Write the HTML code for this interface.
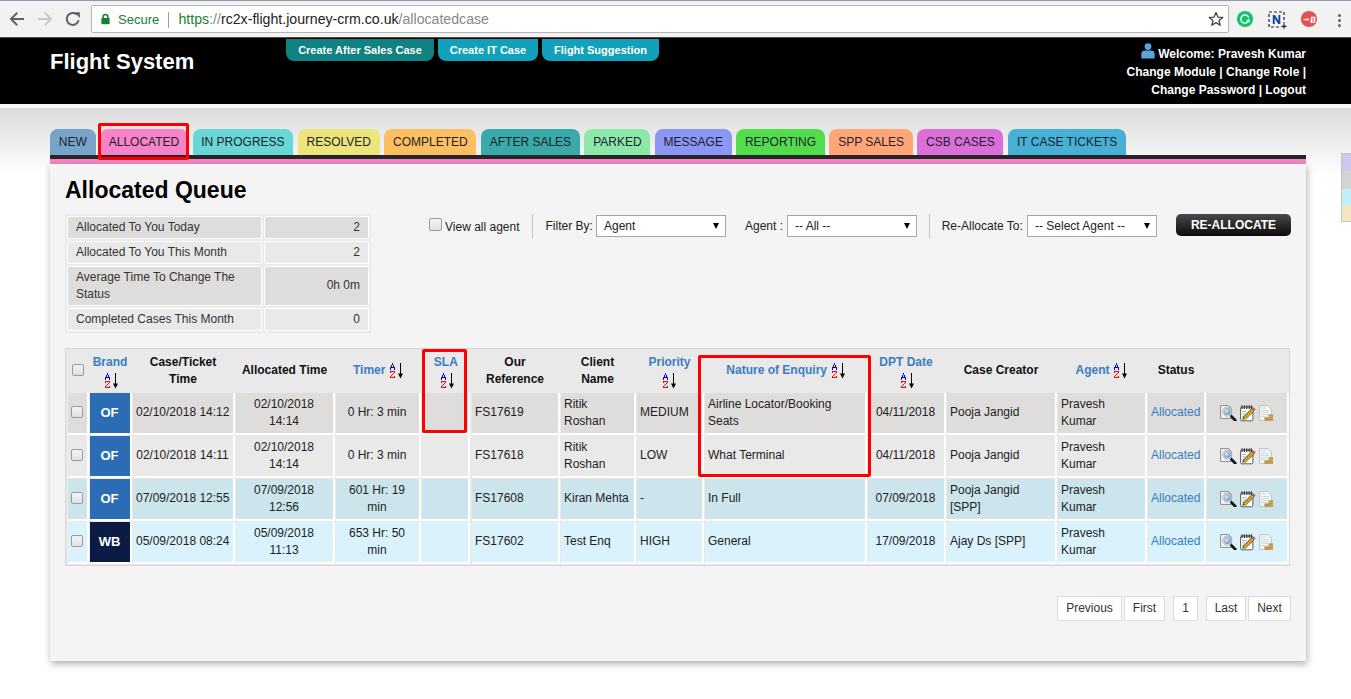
<!DOCTYPE html>
<html><head><meta charset="utf-8">
<style>
*{box-sizing:border-box;margin:0;padding:0}
html,body{width:1351px;height:699px;overflow:hidden;background:#fff;font-family:"Liberation Sans",sans-serif;font-size:12px;color:#222}
.abs{position:absolute}
#chrome{position:absolute;left:0;top:0;width:1351px;height:37px;background:#f2f2f2;border-top:1px solid #8f99a8}
#addr{position:absolute;left:91px;top:4px;width:1138px;height:28px;background:#fff;border:1px solid #b4b4b4;border-radius:2px}
#hdr{position:absolute;left:0;top:37px;width:1351px;height:67px;background:#000;box-shadow:inset 0 1px 0 #4a4a4a}
#strip{position:absolute;left:0;top:104px;width:1351px;height:4px;background:#f7f7f7}
#grad{position:absolute;left:0;top:108px;width:1351px;height:68px;background:linear-gradient(#dcdcdc,#fff)}
.topbtn{position:absolute;top:39px;height:22px;border-radius:0 0 8px 8px;color:#fff;font-weight:bold;font-size:11px;line-height:22px;text-align:center}
.tab{position:absolute;top:129px;height:26px;line-height:26px;border-radius:8px 8px 0 0;font-size:12px;color:#1d1d2b;text-align:center;white-space:nowrap}
#panel{position:absolute;left:50px;top:164px;width:1256px;height:497px;background:#f4f4f4;box-shadow:1px 3px 7px rgba(0,0,0,.32)}
.redbox{position:absolute;border:3px solid #f00;border-radius:2px}
.sel{position:absolute;top:215px;height:22px;width:130px;background:#fff;border:1px solid #a6a6a6;font-size:12px;line-height:20px;padding-left:7px}
.sel:after{content:"";position:absolute;right:6px;top:6.5px;border-left:3.5px solid transparent;border-right:3.5px solid transparent;border-top:6.5px solid #000}
.cb{position:absolute;width:12px;height:12px;border:1px solid #9a9a9a;border-radius:2px;background:linear-gradient(#f4f4f4,#e0e0e0)}
.lbl{position:absolute;font-size:12px;white-space:nowrap;line-height:17px;color:#222}
.st{position:absolute;border:1px solid #fff;padding:2px 8px;line-height:17px;font-size:12px;color:#333;white-space:nowrap}
.th{position:absolute;text-align:center;font-weight:bold;font-size:12px;line-height:17px;white-space:nowrap}
.td{position:absolute;border-right:2px solid #fff;border-bottom:2px solid #fff;display:flex;align-items:center;padding:0 4px 0.6px 3px;font-size:12px;line-height:17px;color:#222;white-space:nowrap}
.td .tdi{width:100%}
.pg{position:absolute;top:596px;height:25px;background:#fff;border:1px solid #dcdcdc;text-align:center;font-size:12px;line-height:23px;color:#333}
</style></head><body>

<div id="chrome">
  <svg class="abs" style="left:9px;top:10px" width="16" height="16" viewBox="0 0 16 16"><path d="M15 8H2.5M8.2 1.8L2 8L8.2 14.2" stroke="#5f6368" stroke-width="2" fill="none"/></svg>
  <svg class="abs" style="left:37px;top:10px" width="16" height="16" viewBox="0 0 16 16"><path d="M1 8H13.5M7.8 1.8L14 8L7.8 14.2" stroke="#c8c9cb" stroke-width="2" fill="none"/></svg>
  <svg class="abs" style="left:65px;top:10px" width="16" height="16" viewBox="0 0 16 16"><path d="M13.6 9.2A6 6 0 1 1 11.9 3.6" stroke="#5f6368" stroke-width="2" fill="none"/><path d="M9.2 1.3H14.9V7Z" fill="#5f6368"/></svg>
  <div id="addr">
    <svg class="abs" style="left:9px;top:6.5px" width="9" height="12" viewBox="0 0 9 12"><path d="M2.1 5.5V3.9A2.4 2.4 0 0 1 6.9 3.9V5.5" stroke="#188038" stroke-width="1.5" fill="none"/><rect x="0.4" y="4.9" width="8.2" height="6.3" fill="#188038"/></svg>
    <div class="abs" style="left:26px;top:6px;font-size:13px;color:#188038;line-height:16px">Secure</div>
    <div class="abs" style="left:76px;top:6px;width:1px;height:16px;background:#9e9e9e"></div>
    <div class="abs" style="left:86.5px;top:5px;font-size:14.15px;line-height:17px;white-space:nowrap;color:#222"><span style="color:#188038">https</span><span style="color:#888">://</span>rc2x-flight.journey-crm.co.uk<span style="color:#888">/allocatedcase</span></div>
    <svg class="abs" style="left:1116px;top:5px" width="16" height="16" viewBox="0 0 16 16"><path d="M8 1.5L9.9 6.1L14.8 6.4L11 9.5L12.2 14.3L8 11.6L3.8 14.3L5 9.5L1.2 6.4L6.1 6.1Z" stroke="#444" stroke-width="1.3" fill="none" stroke-linejoin="round"/></svg>
  </div>
  <svg class="abs" style="left:1236px;top:9px" width="18" height="18" viewBox="0 0 18 18"><circle cx="9" cy="9" r="8.1" fill="#15c26b"/><path d="M12.7 7.4A4.1 4.1 0 1 0 12.3 11.4" stroke="#fff" stroke-width="1.4" fill="none"/><path d="M10.3 10.4L13 11.6L12.9 8.7" stroke="#fff" stroke-width="1.2" fill="none"/></svg>
  <svg class="abs" style="left:1268px;top:10px" width="19" height="18" viewBox="0 0 19 18"><rect x="1" y="1" width="15" height="15" stroke="#222" stroke-width="1.2" stroke-dasharray="3 2" fill="none"/><path d="M4.8 13V4H6.8L10.4 9.6V4H12.3V13H10.3L6.7 7.4V13Z" fill="#1447a6"/><rect x="13.5" y="12.5" width="5" height="5" fill="#f2f2f2"/><path d="M16 12.8V17.8M13.5 15.3H18.5" stroke="#222" stroke-width="1.2"/></svg>
  <svg class="abs" style="left:1300px;top:9px" width="18" height="18" viewBox="0 0 18 18"><circle cx="9" cy="9" r="8.1" fill="#e05254"/><path d="M11.2 6.8H14.6Q15.8 6.8 15.6 8.2L15.5 9Q15.4 9.6 14.9 9.8Q15.5 10.1 15.4 10.8L15.3 11.6Q15.1 12.8 14 12.8H10.4ZM12.4 8.1L12.2 9.3H14.1L14.2 8.1ZM12.1 10.3L11.9 11.6H13.9L14 10.3Z" fill="#fff"/><path d="M2.8 9.2L10 8.2L8.4 9.4L9.3 11.2L7.5 10.3L5.5 10.6Z" fill="#fff" opacity="0.9"/></svg>
  <svg class="abs" style="left:1337px;top:12px" width="5" height="15" viewBox="0 0 5 15"><circle cx="2.5" cy="2.5" r="1.5" fill="#5f6368"/><circle cx="2.5" cy="7.5" r="1.5" fill="#5f6368"/><circle cx="2.5" cy="12.5" r="1.5" fill="#5f6368"/></svg>
</div>

<div id="hdr">
  <div class="abs" style="left:50px;top:12px;font-size:22px;font-weight:bold;color:#fff;line-height:25px;white-space:nowrap">Flight System</div>
  <div class="topbtn" style="left:286px;width:148px;top:2px;background:#118181">Create After Sales Case</div>
  <div class="topbtn" style="left:438px;width:100px;top:2px;background:#12a1bb">Create IT Case</div>
  <div class="topbtn" style="left:542px;width:117px;top:2px;background:#12a1bb">Flight Suggestion</div>
  <div class="abs" style="right:45px;top:8px;text-align:right;color:#fff;font-weight:bold;font-size:12px;line-height:18px;white-space:nowrap"><span style="position:relative">Welcome: Pravesh Kumar<svg class="abs" style="left:-17.5px;top:-3.8px" width="14" height="16" viewBox="0 0 14 16"><circle cx="7" cy="3.6" r="3.4" fill="#5aa3dc"/><path d="M0.3 15.6V11.2Q0.3 7.6 3.8 7.6H10.2Q13.7 7.6 13.7 11.2V15.6Z" fill="#5aa3dc"/></svg></span><br>Change Module | Change Role |<br>Change Password | Logout</div>
</div>
<div id="strip"></div>
<div id="grad"></div>

<!-- side boxes -->
<div class="abs" style="left:1341px;top:153px;width:12px;height:69px;border:1px solid #c4c4c4">
  <div style="height:17px;background:#cfc6ee"></div>
  <div style="height:18px;background:#d3d3d3"></div>
  <div style="height:16px;background:#c0eefa"></div>
  <div style="height:16px;background:#f3e6c0"></div>
</div>

<!-- tabs -->
<div class="tab" style="left:50px;width:45.5px;background:#76a5c9">NEW</div>
<div class="tab" style="left:100px;width:88px;background:#f784c8">ALLOCATED</div>
<div class="tab" style="left:192.5px;width:100.8px;background:#68d7d6">IN PROGRESS</div>
<div class="tab" style="left:297.8px;width:82px;background:#ebe57c">RESOLVED</div>
<div class="tab" style="left:384.3px;width:92.2px;background:#fcc062">COMPLETED</div>
<div class="tab" style="left:481px;width:98.9px;background:#3aa9a9">AFTER SALES</div>
<div class="tab" style="left:584.4px;width:66px;background:#8ce9a9">PARKED</div>
<div class="tab" style="left:654.8px;width:76.9px;background:#8b96f5">MESSAGE</div>
<div class="tab" style="left:736.2px;width:88.6px;background:#52dd4f">REPORTING</div>
<div class="tab" style="left:829.3px;width:83.5px;background:#ffa679">SPP SALES</div>
<div class="tab" style="left:917.3px;width:86.2px;background:#da6fd8">CSB CASES</div>
<div class="tab" style="left:1008px;width:118.2px;background:#47b1d5">IT CASE TICKETS</div>
<div class="abs" style="left:50px;top:155px;width:1256px;height:4px;background:#262626"></div>
<div class="abs" style="left:50px;top:159px;width:1256px;height:5px;background:#f584c4"></div>

<div id="panel"></div>

<!-- title -->
<div class="abs" style="left:65px;top:177px;font-size:23px;font-weight:bold;color:#000;line-height:26px;white-space:nowrap">Allocated Queue</div>

<!-- BODY_START -->
<div class="abs" style="left:65px;top:214px;width:306px;height:119px;background:#ebebeb"></div>
<div class="st" style="left:67px;top:216px;width:195px;height:23px;background:#dfdddb">Allocated To You Today</div>
<div class="st" style="left:264px;top:216px;width:105px;height:23px;background:#dfdddb;text-align:right;padding-top:2px">2</div>
<div class="st" style="left:67px;top:241px;width:195px;height:23px;background:#e9e9e9">Allocated To You This Month</div>
<div class="st" style="left:264px;top:241px;width:105px;height:23px;background:#e9e9e9;text-align:right;padding-top:2px">2</div>
<div class="st" style="left:67px;top:266px;width:195px;height:40px;background:#dfdddb">Average Time To Change The<br>Status</div>
<div class="st" style="left:264px;top:266px;width:105px;height:40px;background:#dfdddb;text-align:right;padding-top:9.5px">0h 0m</div>
<div class="st" style="left:67px;top:308px;width:195px;height:23px;background:#e9e9e9">Completed Cases This Month</div>
<div class="st" style="left:264px;top:308px;width:105px;height:23px;background:#e9e9e9;text-align:right;padding-top:2px">0</div>
<div class="cb" style="left:429px;top:218px;width:13px;height:13px"></div>
<div class="lbl" style="left:445px;top:218.5px">View all agent</div>
<div class="abs" style="left:532px;top:214px;width:1px;height:24px;background:#c2c2c2"></div>
<div class="lbl" style="left:545.5px;top:218px">Filter By:</div>
<div class="sel" style="left:596px">Agent</div>
<div class="lbl" style="left:745px;top:218px">Agent :</div>
<div class="sel" style="left:787px">-- All --</div>
<div class="abs" style="left:929px;top:214px;width:1px;height:24px;background:#c2c2c2"></div>
<div class="lbl" style="left:941.7px;top:218px">Re-Allocate To:</div>
<div class="sel" style="left:1027px">-- Select Agent --</div>
<div class="abs" style="left:1176px;top:214px;width:115px;height:22px;border-radius:5px;background:linear-gradient(#3c3c3c,#0c0c0c);color:#fff;font-weight:bold;font-size:12px;line-height:23px;text-align:center;background:linear-gradient(#4a4a4d,#0a0a0a)">RE-ALLOCATE</div>
<div class="abs" style="left:65px;top:348px;width:1225px;height:218px;border:1px solid #d6d6d6;background:#e9e9e9"></div>
<div class="cb" style="left:72px;top:364px;width:12px;height:12px"></div>
<div class="th" style="left:90px;top:354.3px;width:40px;color:#3b7dc0">Brand</div>
<svg class="abs" style="left:102.6px;top:372.6px" width="16" height="16" viewBox="0 0 16 16" shape-rendering="crispEdges"><path d="M4 0h1v2h-1zM3 2h1v2h-1zM5 2h1v2h-1zM2 4h5v1h-5zM2 5h1v2h-1zM6 5h1v2h-1z" fill="#00f"/><path d="M2 8h5v1h-5zM2 9h1v1h-1zM6 9h1v1h-1zM5 10h1v1h-1zM4 11h1v1h-1zM3 12h1v1h-1zM2 13h1v1h-1zM6 13h1v1h-1zM2 14h5v1h-5z" fill="#f00"/><path d="M12 0h1v11h-1z" fill="#000"/><path d="M10 10.5L15 10.5L12.5 15.5Z" fill="#000" shape-rendering="geometricPrecision"/></svg>
<div class="th" style="left:133px;top:354.3px;width:100px;color:#111">Case/Ticket<br>Time</div>
<div class="th" style="left:236px;top:362px;width:97px;color:#111">Allocated Time</div>
<div class="th" style="left:353px;top:362px;width:40px;text-align:left;color:#3b7dc0">Timer</div>
<svg class="abs" style="left:388px;top:363px" width="16" height="16" viewBox="0 0 16 16" shape-rendering="crispEdges"><path d="M4 0h1v2h-1zM3 2h1v2h-1zM5 2h1v2h-1zM2 4h5v1h-5zM2 5h1v2h-1zM6 5h1v2h-1z" fill="#00f"/><path d="M2 8h5v1h-5zM2 9h1v1h-1zM6 9h1v1h-1zM5 10h1v1h-1zM4 11h1v1h-1zM3 12h1v1h-1zM2 13h1v1h-1zM6 13h1v1h-1zM2 14h5v1h-5z" fill="#f00"/><path d="M12 0h1v11h-1z" fill="#000"/><path d="M10 10.5L15 10.5L12.5 15.5Z" fill="#000" shape-rendering="geometricPrecision"/></svg>
<div class="th" style="left:433.8px;top:354.3px;width:30px;text-align:left;color:#3b7dc0">SLA</div>
<svg class="abs" style="left:438.5px;top:373px" width="16" height="16" viewBox="0 0 16 16" shape-rendering="crispEdges"><path d="M4 0h1v2h-1zM3 2h1v2h-1zM5 2h1v2h-1zM2 4h5v1h-5zM2 5h1v2h-1zM6 5h1v2h-1z" fill="#00f"/><path d="M2 8h5v1h-5zM2 9h1v1h-1zM6 9h1v1h-1zM5 10h1v1h-1zM4 11h1v1h-1zM3 12h1v1h-1zM2 13h1v1h-1zM6 13h1v1h-1zM2 14h5v1h-5z" fill="#f00"/><path d="M12 0h1v11h-1z" fill="#000"/><path d="M10 10.5L15 10.5L12.5 15.5Z" fill="#000" shape-rendering="geometricPrecision"/></svg>
<div class="th" style="left:472px;top:354.3px;width:86px;color:#111">Our<br>Reference</div>
<div class="th" style="left:561px;top:354.3px;width:73px;color:#111">Client<br>Name</div>
<div class="th" style="left:637px;top:354.3px;width:65px;color:#3b7dc0">Priority</div>
<svg class="abs" style="left:661.4px;top:372.6px" width="16" height="16" viewBox="0 0 16 16" shape-rendering="crispEdges"><path d="M4 0h1v2h-1zM3 2h1v2h-1zM5 2h1v2h-1zM2 4h5v1h-5zM2 5h1v2h-1zM6 5h1v2h-1z" fill="#00f"/><path d="M2 8h5v1h-5zM2 9h1v1h-1zM6 9h1v1h-1zM5 10h1v1h-1zM4 11h1v1h-1zM3 12h1v1h-1zM2 13h1v1h-1zM6 13h1v1h-1zM2 14h5v1h-5z" fill="#f00"/><path d="M12 0h1v11h-1z" fill="#000"/><path d="M10 10.5L15 10.5L12.5 15.5Z" fill="#000" shape-rendering="geometricPrecision"/></svg>
<div class="th" style="left:726.3px;top:362px;width:110px;text-align:left;color:#3b7dc0">Nature of Enquiry</div>
<svg class="abs" style="left:829.8px;top:363px" width="16" height="16" viewBox="0 0 16 16" shape-rendering="crispEdges"><path d="M4 0h1v2h-1zM3 2h1v2h-1zM5 2h1v2h-1zM2 4h5v1h-5zM2 5h1v2h-1zM6 5h1v2h-1z" fill="#00f"/><path d="M2 8h5v1h-5zM2 9h1v1h-1zM6 9h1v1h-1zM5 10h1v1h-1zM4 11h1v1h-1zM3 12h1v1h-1zM2 13h1v1h-1zM6 13h1v1h-1zM2 14h5v1h-5z" fill="#f00"/><path d="M12 0h1v11h-1z" fill="#000"/><path d="M10 10.5L15 10.5L12.5 15.5Z" fill="#000" shape-rendering="geometricPrecision"/></svg>
<div class="th" style="left:868px;top:354.3px;width:76px;color:#3b7dc0">DPT Date</div>
<svg class="abs" style="left:898.8px;top:372.6px" width="16" height="16" viewBox="0 0 16 16" shape-rendering="crispEdges"><path d="M4 0h1v2h-1zM3 2h1v2h-1zM5 2h1v2h-1zM2 4h5v1h-5zM2 5h1v2h-1zM6 5h1v2h-1z" fill="#00f"/><path d="M2 8h5v1h-5zM2 9h1v1h-1zM6 9h1v1h-1zM5 10h1v1h-1zM4 11h1v1h-1zM3 12h1v1h-1zM2 13h1v1h-1zM6 13h1v1h-1zM2 14h5v1h-5z" fill="#f00"/><path d="M12 0h1v11h-1z" fill="#000"/><path d="M10 10.5L15 10.5L12.5 15.5Z" fill="#000" shape-rendering="geometricPrecision"/></svg>
<div class="th" style="left:947px;top:362px;width:108px;color:#111">Case Creator</div>
<div class="th" style="left:1075.6px;top:362px;width:40px;text-align:left;color:#3b7dc0">Agent</div>
<svg class="abs" style="left:1112px;top:363px" width="16" height="16" viewBox="0 0 16 16" shape-rendering="crispEdges"><path d="M4 0h1v2h-1zM3 2h1v2h-1zM5 2h1v2h-1zM2 4h5v1h-5zM2 5h1v2h-1zM6 5h1v2h-1z" fill="#00f"/><path d="M2 8h5v1h-5zM2 9h1v1h-1zM6 9h1v1h-1zM5 10h1v1h-1zM4 11h1v1h-1zM3 12h1v1h-1zM2 13h1v1h-1zM6 13h1v1h-1zM2 14h5v1h-5z" fill="#f00"/><path d="M12 0h1v11h-1z" fill="#000"/><path d="M10 10.5L15 10.5L12.5 15.5Z" fill="#000" shape-rendering="geometricPrecision"/></svg>
<div class="th" style="left:1148px;top:362px;width:56px;color:#111">Status</div>
<div class="td" style="left:68px;top:393px;width:21px;height:42px;background:#dfdddb;text-align:center;"><div class="tdi"></div></div>
<div class="td" style="left:90px;top:393px;width:42px;height:42px;background:#2b6cb4;text-align:center;color:#fff;font-weight:bold;font-size:13px;"><div class="tdi">OF</div></div>
<div class="td" style="left:133px;top:393px;width:102px;height:42px;background:#dfdddb;text-align:center;"><div class="tdi">02/10/2018 14:12</div></div>
<div class="td" style="left:236px;top:393px;width:99px;height:42px;background:#dfdddb;text-align:center;"><div class="tdi">02/10/2018<br>14:14</div></div>
<div class="td" style="left:336px;top:393px;width:85px;height:42px;background:#dfdddb;text-align:center;"><div class="tdi">0 Hr: 3 min</div></div>
<div class="td" style="left:422px;top:393px;width:48px;height:42px;background:#dfdddb;text-align:center;"><div class="tdi"></div></div>
<div class="td" style="left:472px;top:393px;width:88px;height:42px;background:#dfdddb;text-align:left;"><div class="tdi">FS17619</div></div>
<div class="td" style="left:561px;top:393px;width:75px;height:42px;background:#dfdddb;text-align:left;"><div class="tdi">Ritik<br>Roshan</div></div>
<div class="td" style="left:637px;top:393px;width:67px;height:42px;background:#dfdddb;text-align:left;"><div class="tdi">MEDIUM</div></div>
<div class="td" style="left:705px;top:393px;width:162px;height:42px;background:#dfdddb;text-align:left;"><div class="tdi">Airline Locator/Booking<br>Seats</div></div>
<div class="td" style="left:868px;top:393px;width:78px;height:42px;background:#dfdddb;text-align:center;"><div class="tdi">04/11/2018</div></div>
<div class="td" style="left:947px;top:393px;width:110px;height:42px;background:#dfdddb;text-align:left;"><div class="tdi">Pooja Jangid</div></div>
<div class="td" style="left:1058px;top:393px;width:89px;height:42px;background:#dfdddb;text-align:left;"><div class="tdi">Pravesh<br>Kumar</div></div>
<div class="td" style="left:1148px;top:393px;width:58px;height:42px;background:#dfdddb;text-align:left;color:#3b7dc0;"><div class="tdi">Allocated</div></div>
<div class="td" style="left:1207px;top:393px;width:82px;height:42px;background:#dfdddb;text-align:center;"><div class="tdi"></div></div>
<div class="cb" style="left:71px;top:406px;width:12px;height:12px"></div>
<svg class="abs" style="left:1219.6px;top:404.8px" width="17" height="16" viewBox="0 0 17 16"><defs><radialGradient id="lg" cx="0.4" cy="0.4" r="0.6"><stop offset="0" stop-color="#e4eff8"/><stop offset="1" stop-color="#5f95c6"/></radialGradient></defs><path d="M0.6 0.6H8.6L11.4 3.4V13.4H0.6Z" fill="#fafafa" stroke="#8a8a8a" stroke-width="1"/><path d="M11.5 11.5L15.2 15.2" stroke="#111" stroke-width="2.8" stroke-linecap="round"/><circle cx="7.2" cy="6.6" r="4.6" fill="#f4f4f4" stroke="#9a9a9a" stroke-width="0.8"/><circle cx="7.2" cy="6.6" r="3.5" fill="url(#lg)"/></svg><svg class="abs" style="left:1240.1px;top:404.8px" width="17" height="17" viewBox="0 0 17 17"><rect x="0.6" y="2" width="12.3" height="13.8" rx="1.2" fill="#fff" stroke="#5a5a5a" stroke-width="1"/><path d="M2 0.8v2.6M4.4 0.8v2.6M6.8 0.8v2.6M9.2 0.8v2.6M11.4 0.8v2.6" stroke="#333" stroke-width="1.3" stroke-linecap="round"/><path d="M2.2 6.5h4M2.2 8.9h3M2.2 11.3h2.5" stroke="#9a9a9a" stroke-width="0.8"/><path d="M4 13.6L12.8 4.8" stroke="#222" stroke-width="3.6" stroke-linecap="butt"/><path d="M4 13.6L12.8 4.8" stroke="#f6c21a" stroke-width="2.4"/><path d="M4.2 13.4L12.6 5" stroke="#2a2a2a" stroke-width="0.7" stroke-dasharray="1 1"/><path d="M12.2 4.2L13.9 2.5L15.6 4.2L13.9 5.9Z" fill="#e04848"/><path d="M2.4 15.3L4.2 13.4L3 12.3Z" fill="#111"/></svg><svg class="abs" style="left:1259.3999999999999px;top:404.8px" width="16" height="17" viewBox="0 0 16 17"><path d="M0.6 0.6H9L12.4 4V15.6H0.6Z" fill="#f1f6f7" stroke="#b9c5c8" stroke-width="1"/><path d="M2 3h5M2 5.5h8M2 7.5h8M2 9.5h8M2 11.5h5" stroke="#cdd8da" stroke-width="0.9"/><rect x="5.5" y="12.3" width="4.8" height="3.7" fill="#c39a4e"/><rect x="9.6" y="9.2" width="4.4" height="6.8" fill="#cfa85a"/><path d="M5.5 13.5h4.8M9.6 10.5h4.4M9.6 12.5h4.4M9.6 14.5h4.4" stroke="#b08a40" stroke-width="0.6"/></svg>
<div class="td" style="left:68px;top:436px;width:21px;height:42px;background:#e9e9e9;text-align:center;"><div class="tdi"></div></div>
<div class="td" style="left:90px;top:436px;width:42px;height:42px;background:#2b6cb4;text-align:center;color:#fff;font-weight:bold;font-size:13px;"><div class="tdi">OF</div></div>
<div class="td" style="left:133px;top:436px;width:102px;height:42px;background:#e9e9e9;text-align:center;"><div class="tdi">02/10/2018 14:11</div></div>
<div class="td" style="left:236px;top:436px;width:99px;height:42px;background:#e9e9e9;text-align:center;"><div class="tdi">02/10/2018<br>14:14</div></div>
<div class="td" style="left:336px;top:436px;width:85px;height:42px;background:#e9e9e9;text-align:center;"><div class="tdi">0 Hr: 3 min</div></div>
<div class="td" style="left:422px;top:436px;width:48px;height:42px;background:#e9e9e9;text-align:center;"><div class="tdi"></div></div>
<div class="td" style="left:472px;top:436px;width:88px;height:42px;background:#e9e9e9;text-align:left;"><div class="tdi">FS17618</div></div>
<div class="td" style="left:561px;top:436px;width:75px;height:42px;background:#e9e9e9;text-align:left;"><div class="tdi">Ritik<br>Roshan</div></div>
<div class="td" style="left:637px;top:436px;width:67px;height:42px;background:#e9e9e9;text-align:left;"><div class="tdi">LOW</div></div>
<div class="td" style="left:705px;top:436px;width:162px;height:42px;background:#e9e9e9;text-align:left;"><div class="tdi">What Terminal</div></div>
<div class="td" style="left:868px;top:436px;width:78px;height:42px;background:#e9e9e9;text-align:center;"><div class="tdi">04/11/2018</div></div>
<div class="td" style="left:947px;top:436px;width:110px;height:42px;background:#e9e9e9;text-align:left;"><div class="tdi">Pooja Jangid</div></div>
<div class="td" style="left:1058px;top:436px;width:89px;height:42px;background:#e9e9e9;text-align:left;"><div class="tdi">Pravesh<br>Kumar</div></div>
<div class="td" style="left:1148px;top:436px;width:58px;height:42px;background:#e9e9e9;text-align:left;color:#3b7dc0;"><div class="tdi">Allocated</div></div>
<div class="td" style="left:1207px;top:436px;width:82px;height:42px;background:#e9e9e9;text-align:center;"><div class="tdi"></div></div>
<div class="cb" style="left:71px;top:449px;width:12px;height:12px"></div>
<svg class="abs" style="left:1219.6px;top:447.8px" width="17" height="16" viewBox="0 0 17 16"><defs><radialGradient id="lg" cx="0.4" cy="0.4" r="0.6"><stop offset="0" stop-color="#e4eff8"/><stop offset="1" stop-color="#5f95c6"/></radialGradient></defs><path d="M0.6 0.6H8.6L11.4 3.4V13.4H0.6Z" fill="#fafafa" stroke="#8a8a8a" stroke-width="1"/><path d="M11.5 11.5L15.2 15.2" stroke="#111" stroke-width="2.8" stroke-linecap="round"/><circle cx="7.2" cy="6.6" r="4.6" fill="#f4f4f4" stroke="#9a9a9a" stroke-width="0.8"/><circle cx="7.2" cy="6.6" r="3.5" fill="url(#lg)"/></svg><svg class="abs" style="left:1240.1px;top:447.8px" width="17" height="17" viewBox="0 0 17 17"><rect x="0.6" y="2" width="12.3" height="13.8" rx="1.2" fill="#fff" stroke="#5a5a5a" stroke-width="1"/><path d="M2 0.8v2.6M4.4 0.8v2.6M6.8 0.8v2.6M9.2 0.8v2.6M11.4 0.8v2.6" stroke="#333" stroke-width="1.3" stroke-linecap="round"/><path d="M2.2 6.5h4M2.2 8.9h3M2.2 11.3h2.5" stroke="#9a9a9a" stroke-width="0.8"/><path d="M4 13.6L12.8 4.8" stroke="#222" stroke-width="3.6" stroke-linecap="butt"/><path d="M4 13.6L12.8 4.8" stroke="#f6c21a" stroke-width="2.4"/><path d="M4.2 13.4L12.6 5" stroke="#2a2a2a" stroke-width="0.7" stroke-dasharray="1 1"/><path d="M12.2 4.2L13.9 2.5L15.6 4.2L13.9 5.9Z" fill="#e04848"/><path d="M2.4 15.3L4.2 13.4L3 12.3Z" fill="#111"/></svg><svg class="abs" style="left:1259.3999999999999px;top:447.8px" width="16" height="17" viewBox="0 0 16 17"><path d="M0.6 0.6H9L12.4 4V15.6H0.6Z" fill="#f1f6f7" stroke="#b9c5c8" stroke-width="1"/><path d="M2 3h5M2 5.5h8M2 7.5h8M2 9.5h8M2 11.5h5" stroke="#cdd8da" stroke-width="0.9"/><rect x="5.5" y="12.3" width="4.8" height="3.7" fill="#c39a4e"/><rect x="9.6" y="9.2" width="4.4" height="6.8" fill="#cfa85a"/><path d="M5.5 13.5h4.8M9.6 10.5h4.4M9.6 12.5h4.4M9.6 14.5h4.4" stroke="#b08a40" stroke-width="0.6"/></svg>
<div class="td" style="left:68px;top:479px;width:21px;height:42px;background:#cce5ec;text-align:center;"><div class="tdi"></div></div>
<div class="td" style="left:90px;top:479px;width:42px;height:42px;background:#2b6cb4;text-align:center;color:#fff;font-weight:bold;font-size:13px;"><div class="tdi">OF</div></div>
<div class="td" style="left:133px;top:479px;width:102px;height:42px;background:#cce5ec;text-align:center;"><div class="tdi">07/09/2018 12:55</div></div>
<div class="td" style="left:236px;top:479px;width:99px;height:42px;background:#cce5ec;text-align:center;"><div class="tdi">07/09/2018<br>12:56</div></div>
<div class="td" style="left:336px;top:479px;width:85px;height:42px;background:#cce5ec;text-align:center;"><div class="tdi">601 Hr: 19<br>min</div></div>
<div class="td" style="left:422px;top:479px;width:48px;height:42px;background:#cce5ec;text-align:center;"><div class="tdi"></div></div>
<div class="td" style="left:472px;top:479px;width:88px;height:42px;background:#cce5ec;text-align:left;"><div class="tdi">FS17608</div></div>
<div class="td" style="left:561px;top:479px;width:75px;height:42px;background:#cce5ec;text-align:left;"><div class="tdi">Kiran Mehta</div></div>
<div class="td" style="left:637px;top:479px;width:67px;height:42px;background:#cce5ec;text-align:left;"><div class="tdi">-</div></div>
<div class="td" style="left:705px;top:479px;width:162px;height:42px;background:#cce5ec;text-align:left;"><div class="tdi">In Full</div></div>
<div class="td" style="left:868px;top:479px;width:78px;height:42px;background:#cce5ec;text-align:center;"><div class="tdi">07/09/2018</div></div>
<div class="td" style="left:947px;top:479px;width:110px;height:42px;background:#cce5ec;text-align:left;"><div class="tdi">Pooja Jangid<br>[SPP]</div></div>
<div class="td" style="left:1058px;top:479px;width:89px;height:42px;background:#cce5ec;text-align:left;"><div class="tdi">Pravesh<br>Kumar</div></div>
<div class="td" style="left:1148px;top:479px;width:58px;height:42px;background:#cce5ec;text-align:left;color:#3b7dc0;"><div class="tdi">Allocated</div></div>
<div class="td" style="left:1207px;top:479px;width:82px;height:42px;background:#cce5ec;text-align:center;"><div class="tdi"></div></div>
<div class="cb" style="left:71px;top:492px;width:12px;height:12px"></div>
<svg class="abs" style="left:1219.6px;top:490.8px" width="17" height="16" viewBox="0 0 17 16"><defs><radialGradient id="lg" cx="0.4" cy="0.4" r="0.6"><stop offset="0" stop-color="#e4eff8"/><stop offset="1" stop-color="#5f95c6"/></radialGradient></defs><path d="M0.6 0.6H8.6L11.4 3.4V13.4H0.6Z" fill="#fafafa" stroke="#8a8a8a" stroke-width="1"/><path d="M11.5 11.5L15.2 15.2" stroke="#111" stroke-width="2.8" stroke-linecap="round"/><circle cx="7.2" cy="6.6" r="4.6" fill="#f4f4f4" stroke="#9a9a9a" stroke-width="0.8"/><circle cx="7.2" cy="6.6" r="3.5" fill="url(#lg)"/></svg><svg class="abs" style="left:1240.1px;top:490.8px" width="17" height="17" viewBox="0 0 17 17"><rect x="0.6" y="2" width="12.3" height="13.8" rx="1.2" fill="#fff" stroke="#5a5a5a" stroke-width="1"/><path d="M2 0.8v2.6M4.4 0.8v2.6M6.8 0.8v2.6M9.2 0.8v2.6M11.4 0.8v2.6" stroke="#333" stroke-width="1.3" stroke-linecap="round"/><path d="M2.2 6.5h4M2.2 8.9h3M2.2 11.3h2.5" stroke="#9a9a9a" stroke-width="0.8"/><path d="M4 13.6L12.8 4.8" stroke="#222" stroke-width="3.6" stroke-linecap="butt"/><path d="M4 13.6L12.8 4.8" stroke="#f6c21a" stroke-width="2.4"/><path d="M4.2 13.4L12.6 5" stroke="#2a2a2a" stroke-width="0.7" stroke-dasharray="1 1"/><path d="M12.2 4.2L13.9 2.5L15.6 4.2L13.9 5.9Z" fill="#e04848"/><path d="M2.4 15.3L4.2 13.4L3 12.3Z" fill="#111"/></svg><svg class="abs" style="left:1259.3999999999999px;top:490.8px" width="16" height="17" viewBox="0 0 16 17"><path d="M0.6 0.6H9L12.4 4V15.6H0.6Z" fill="#f1f6f7" stroke="#b9c5c8" stroke-width="1"/><path d="M2 3h5M2 5.5h8M2 7.5h8M2 9.5h8M2 11.5h5" stroke="#cdd8da" stroke-width="0.9"/><rect x="5.5" y="12.3" width="4.8" height="3.7" fill="#c39a4e"/><rect x="9.6" y="9.2" width="4.4" height="6.8" fill="#cfa85a"/><path d="M5.5 13.5h4.8M9.6 10.5h4.4M9.6 12.5h4.4M9.6 14.5h4.4" stroke="#b08a40" stroke-width="0.6"/></svg>
<div class="td" style="left:68px;top:522px;width:21px;height:42px;background:#d9f2fc;text-align:center;"><div class="tdi"></div></div>
<div class="td" style="left:90px;top:522px;width:42px;height:42px;background:#0b1b45;text-align:center;color:#fff;font-weight:bold;font-size:13px;"><div class="tdi">WB</div></div>
<div class="td" style="left:133px;top:522px;width:102px;height:42px;background:#d9f2fc;text-align:center;"><div class="tdi">05/09/2018 08:24</div></div>
<div class="td" style="left:236px;top:522px;width:99px;height:42px;background:#d9f2fc;text-align:center;"><div class="tdi">05/09/2018<br>11:13</div></div>
<div class="td" style="left:336px;top:522px;width:85px;height:42px;background:#d9f2fc;text-align:center;"><div class="tdi">653 Hr: 50<br>min</div></div>
<div class="td" style="left:422px;top:522px;width:48px;height:42px;background:#d9f2fc;text-align:center;"><div class="tdi"></div></div>
<div class="td" style="left:472px;top:522px;width:88px;height:42px;background:#d9f2fc;text-align:left;"><div class="tdi">FS17602</div></div>
<div class="td" style="left:561px;top:522px;width:75px;height:42px;background:#d9f2fc;text-align:left;"><div class="tdi">Test Enq</div></div>
<div class="td" style="left:637px;top:522px;width:67px;height:42px;background:#d9f2fc;text-align:left;"><div class="tdi">HIGH</div></div>
<div class="td" style="left:705px;top:522px;width:162px;height:42px;background:#d9f2fc;text-align:left;"><div class="tdi">General</div></div>
<div class="td" style="left:868px;top:522px;width:78px;height:42px;background:#d9f2fc;text-align:center;"><div class="tdi">17/09/2018</div></div>
<div class="td" style="left:947px;top:522px;width:110px;height:42px;background:#d9f2fc;text-align:left;"><div class="tdi">Ajay Ds [SPP]</div></div>
<div class="td" style="left:1058px;top:522px;width:89px;height:42px;background:#d9f2fc;text-align:left;"><div class="tdi">Pravesh<br>Kumar</div></div>
<div class="td" style="left:1148px;top:522px;width:58px;height:42px;background:#d9f2fc;text-align:left;color:#3b7dc0;"><div class="tdi">Allocated</div></div>
<div class="td" style="left:1207px;top:522px;width:82px;height:42px;background:#d9f2fc;text-align:center;"><div class="tdi"></div></div>
<div class="cb" style="left:71px;top:535px;width:12px;height:12px"></div>
<svg class="abs" style="left:1219.6px;top:533.8px" width="17" height="16" viewBox="0 0 17 16"><defs><radialGradient id="lg" cx="0.4" cy="0.4" r="0.6"><stop offset="0" stop-color="#e4eff8"/><stop offset="1" stop-color="#5f95c6"/></radialGradient></defs><path d="M0.6 0.6H8.6L11.4 3.4V13.4H0.6Z" fill="#fafafa" stroke="#8a8a8a" stroke-width="1"/><path d="M11.5 11.5L15.2 15.2" stroke="#111" stroke-width="2.8" stroke-linecap="round"/><circle cx="7.2" cy="6.6" r="4.6" fill="#f4f4f4" stroke="#9a9a9a" stroke-width="0.8"/><circle cx="7.2" cy="6.6" r="3.5" fill="url(#lg)"/></svg><svg class="abs" style="left:1240.1px;top:533.8px" width="17" height="17" viewBox="0 0 17 17"><rect x="0.6" y="2" width="12.3" height="13.8" rx="1.2" fill="#fff" stroke="#5a5a5a" stroke-width="1"/><path d="M2 0.8v2.6M4.4 0.8v2.6M6.8 0.8v2.6M9.2 0.8v2.6M11.4 0.8v2.6" stroke="#333" stroke-width="1.3" stroke-linecap="round"/><path d="M2.2 6.5h4M2.2 8.9h3M2.2 11.3h2.5" stroke="#9a9a9a" stroke-width="0.8"/><path d="M4 13.6L12.8 4.8" stroke="#222" stroke-width="3.6" stroke-linecap="butt"/><path d="M4 13.6L12.8 4.8" stroke="#f6c21a" stroke-width="2.4"/><path d="M4.2 13.4L12.6 5" stroke="#2a2a2a" stroke-width="0.7" stroke-dasharray="1 1"/><path d="M12.2 4.2L13.9 2.5L15.6 4.2L13.9 5.9Z" fill="#e04848"/><path d="M2.4 15.3L4.2 13.4L3 12.3Z" fill="#111"/></svg><svg class="abs" style="left:1259.3999999999999px;top:533.8px" width="16" height="17" viewBox="0 0 16 17"><path d="M0.6 0.6H9L12.4 4V15.6H0.6Z" fill="#f1f6f7" stroke="#b9c5c8" stroke-width="1"/><path d="M2 3h5M2 5.5h8M2 7.5h8M2 9.5h8M2 11.5h5" stroke="#cdd8da" stroke-width="0.9"/><rect x="5.5" y="12.3" width="4.8" height="3.7" fill="#c39a4e"/><rect x="9.6" y="9.2" width="4.4" height="6.8" fill="#cfa85a"/><path d="M5.5 13.5h4.8M9.6 10.5h4.4M9.6 12.5h4.4M9.6 14.5h4.4" stroke="#b08a40" stroke-width="0.6"/></svg>
<div class="pg" style="left:1057px;width:65px">Previous</div>
<div class="pg" style="left:1124px;width:41px">First</div>
<div class="pg" style="left:1173px;width:25px">1</div>
<div class="pg" style="left:1206px;width:40px">Last</div>
<div class="pg" style="left:1248px;width:43px">Next</div>
<!-- BODY_END -->

<div class="redbox" style="left:98px;top:123px;width:90.5px;height:37px"></div>
<div class="redbox" style="left:422px;top:349px;width:45px;height:84px"></div>
<div class="redbox" style="left:697.5px;top:355px;width:173px;height:121.5px"></div>
</body></html>
